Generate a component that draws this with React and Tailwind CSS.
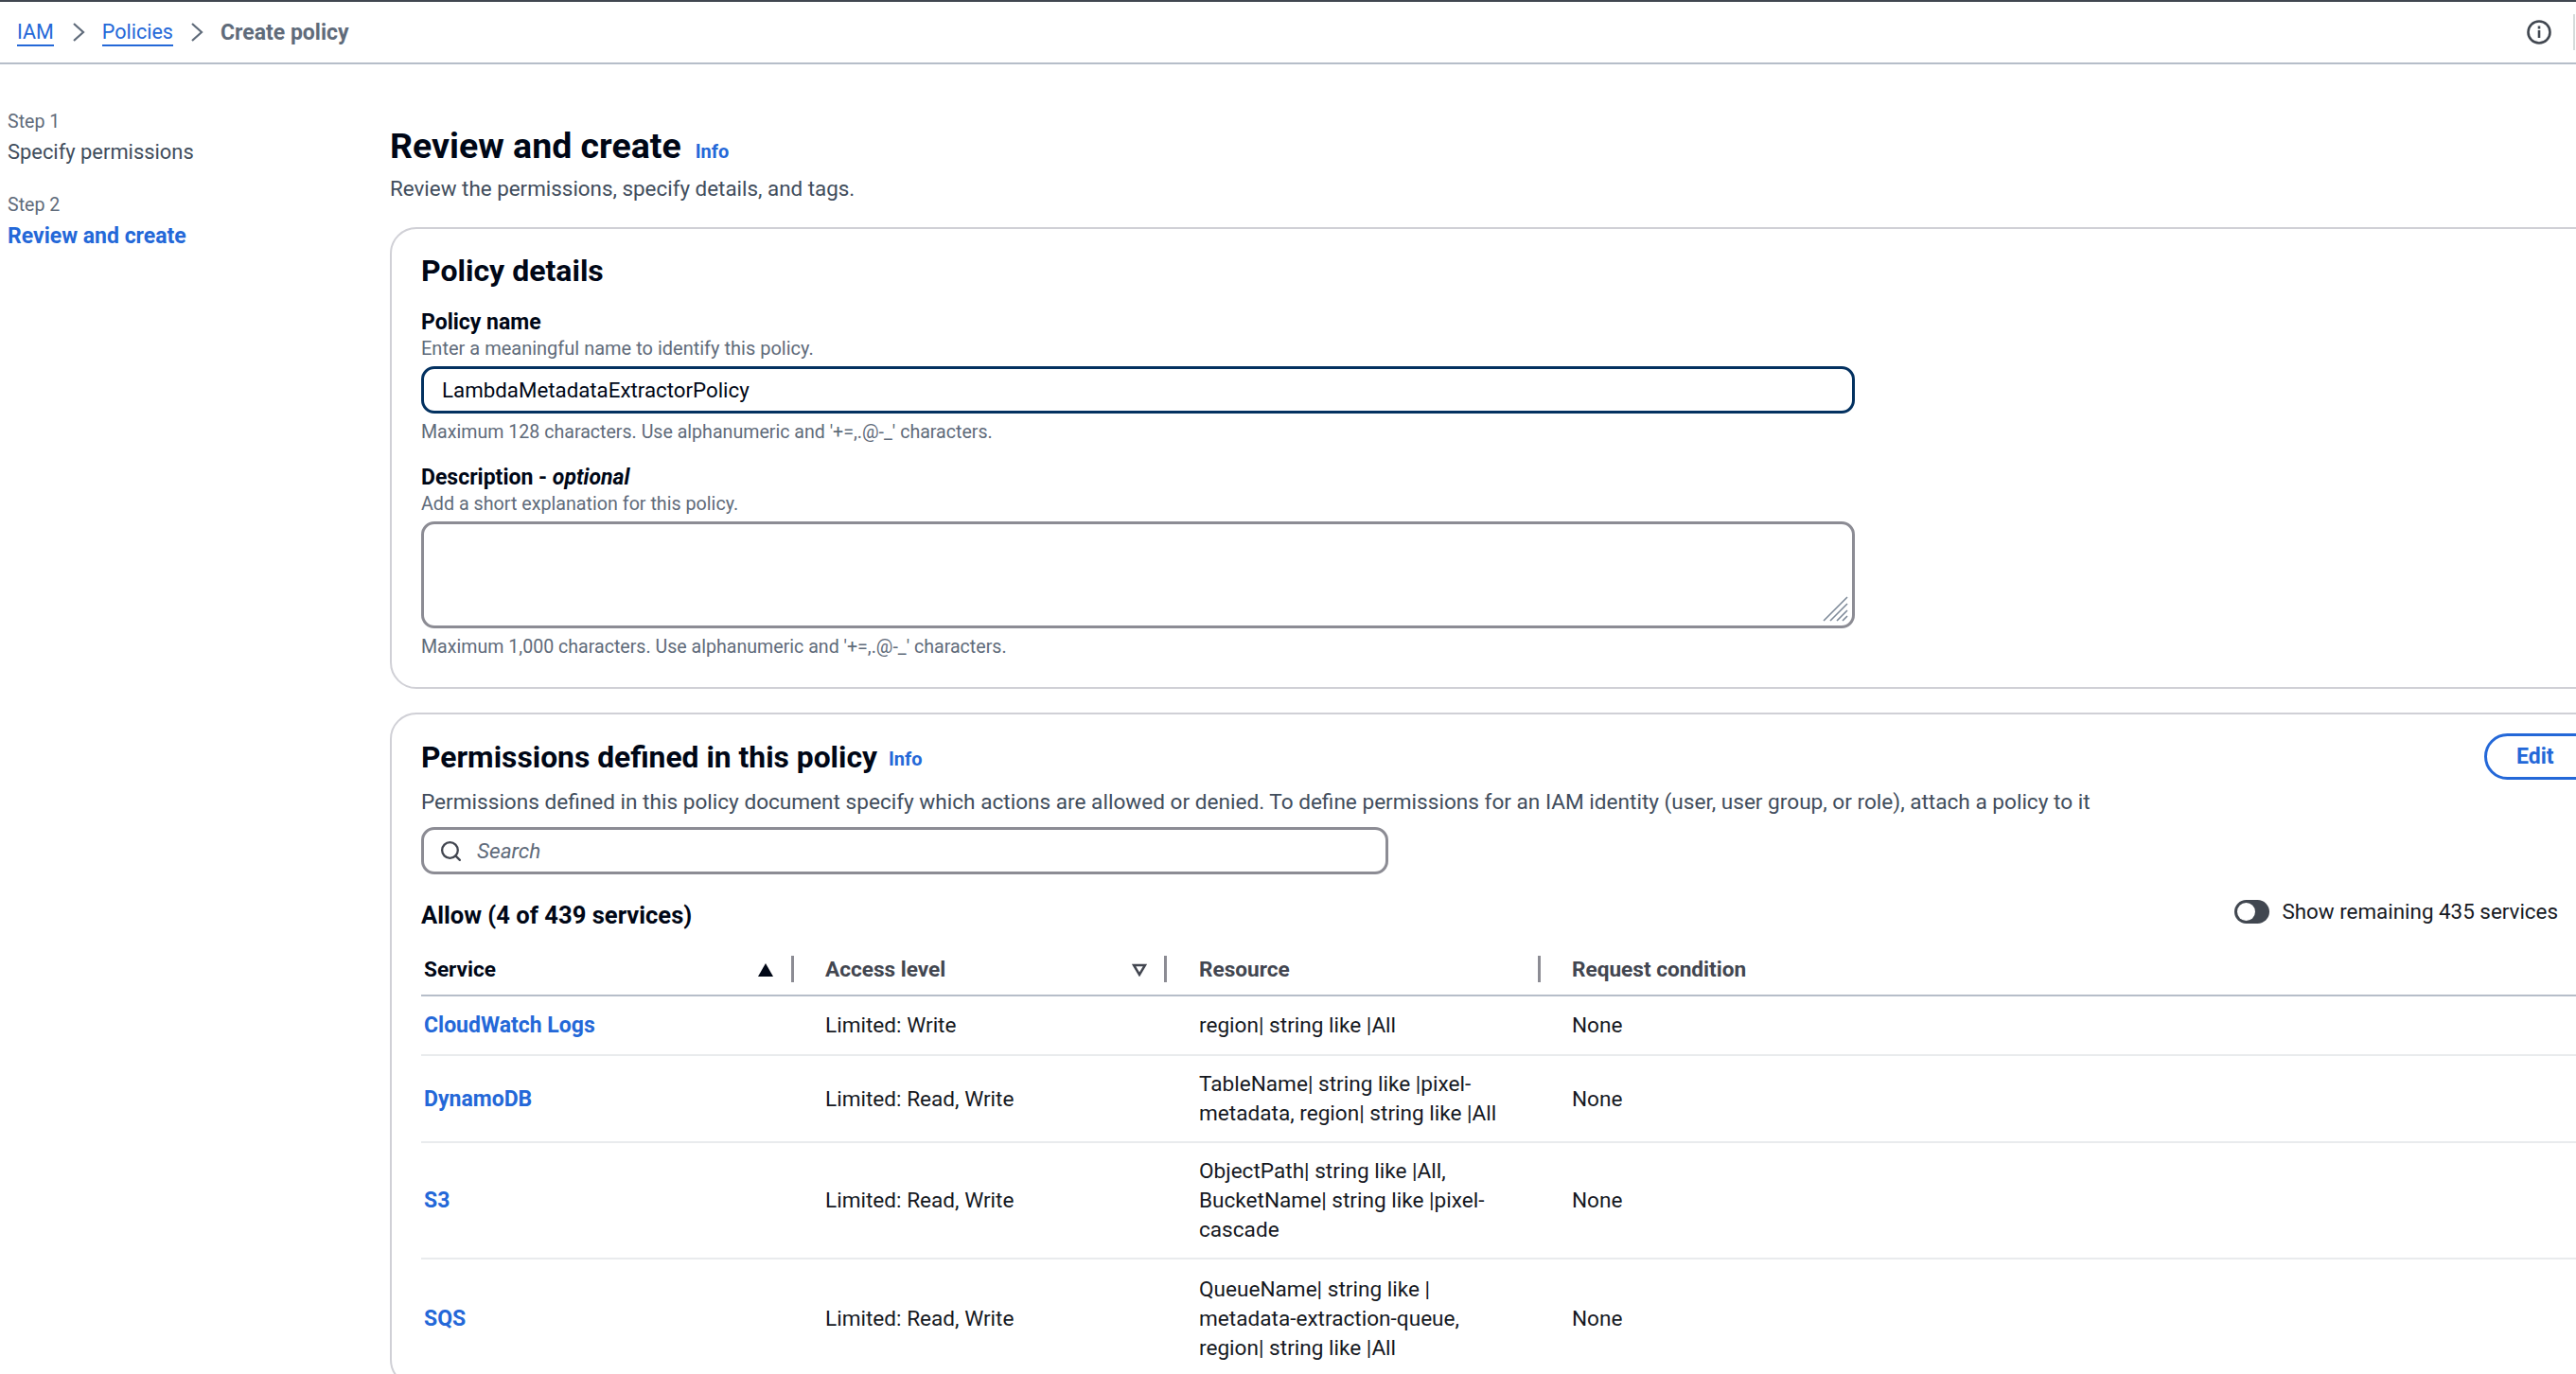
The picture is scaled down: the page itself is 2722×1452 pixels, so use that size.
import { Search } from "lucide-react";

const font = "font-['Roboto','Liberation_Sans',sans-serif]";

const rows = [
  { service: "CloudWatch Logs", access: "Limited: Write", resource: ["region| string like |All"], h: "h-[63px] border-b-2" },
  { service: "DynamoDB", access: "Limited: Read, Write", resource: ["TableName| string like |pixel-", "metadata, region| string like |All"], h: "h-[92px] border-b-2" },
  { service: "S3", access: "Limited: Read, Write", resource: ["ObjectPath| string like |All,", "BucketName| string like |pixel-", "cascade"], h: "h-[123px] border-b-2" },
  { service: "SQS", access: "Limited: Read, Write", resource: ["QueueName| string like |", "metadata-extraction-queue,", "region| string like |All"], h: "h-[124px]" },
];

const Chevron = () => (
  <svg width="16" height="22" viewBox="0 0 16 22" fill="none" stroke="#5f6b7a" strokeWidth="2.2">
    <path d="M3 2l10 9-10 9" />
  </svg>
);

const ColumnHead = ({ label, className, dark, sort, sep = true }) => (
  <div className={`relative flex h-full items-center font-bold ${className} ${dark ? "text-[#000716]" : "text-[#424650]"}`}>
    {label}
    {sort === "asc" && (
      <svg className="absolute right-[22px] top-[21px]" width="16" height="14" viewBox="0 0 16 14">
        <path d="M8 0l8 14H0z" fill="#000716" />
      </svg>
    )}
    {sort === "desc" && (
      <svg className="absolute right-[21px] top-[21px]" width="16" height="14" viewBox="0 0 16 14" fill="none" stroke="#424650" strokeWidth="2.5">
        <path d="M2 2h12L8 12z" />
      </svg>
    )}
    {sep && <span className="absolute right-0 top-[13px] h-[28px] w-[3px] bg-[#8c8c94]" />}
  </div>
);

export default function App() {
  return (
    <div className={`h-[1452px] w-[2722px] overflow-hidden bg-white text-[22.6px] leading-[31px] text-[#16191f] ${font}`}>
      <header className="flex h-[68px] items-center border-t-2 border-b-2 border-t-[#414750] border-b-[#b6bec9] pl-[18px] pr-[1px]">
        <a className="border-b-2 border-[#2468d8] text-[21.5px] leading-[27px] text-[#2468d8]">IAM</a>
        <span className="ml-[18px] mr-[17px]"><Chevron /></span>
        <a className="border-b-2 border-[#2468d8] text-[21.5px] leading-[27px] text-[#2468d8]">Policies</a>
        <span className="ml-[17px] mr-[17px]"><Chevron /></span>
        <span className="text-[23px] font-bold text-[#5f6b7a]">Create policy</span>
        <svg className="ml-auto mr-[23px]" width="26" height="26" viewBox="0 0 26 26" fill="none" stroke="#414750" strokeWidth="2.6">
          <circle cx="13" cy="13" r="11.5" />
          <path d="M13 11v8" />
          <path d="M13 6.5v3" />
        </svg>
        <span className="h-[38px] w-[2px] bg-[#d5dbdb]" />
      </header>

      <div className="flex">
        <nav className="w-[412px] shrink-0 pl-2 pt-[47px]">
          <div className="text-[19.6px] leading-[27px] text-[#5f6b7a]">Step 1</div>
          <div className="mt-[3px] text-[21.9px] text-[#414d5c]">Specify permissions</div>
          <div className="mt-[27px] text-[19.6px] leading-[27px] text-[#5f6b7a]">Step 2</div>
          <div className="mt-[4px] text-[23px] font-bold text-[#2468d8]">Review and create</div>
        </nav>

        <main className="w-[2400px] shrink-0 pt-[64px]">
          <div className="flex items-baseline">
            <h1 className="text-[37.5px] font-bold leading-[44px] text-[#000716]">Review and create</h1>
            <a className="ml-[15px] text-[20px] font-bold text-[#2468d8]">Info</a>
          </div>
          <p className="mt-[8px] text-[22.4px] text-[#414d5c]">Review the permissions, specify details, and tags.</p>

          <section className="mt-[25px] h-[488px] rounded-[28px] border-2 border-[#d0d0d6] pl-[31px] pt-[25px]">
            <h2 className="text-[32px] font-bold leading-[38px] text-[#000716]">Policy details</h2>
            <label className="mt-[20px] block text-[23px] font-bold text-[#000716]">Policy name</label>
            <div className="text-[20px] leading-[25px] text-[#5f6b7a]">Enter a meaningful name to identify this policy.</div>
            <div className="mt-[6px] flex h-[50px] w-[1515px] items-center rounded-[14px] border-[3.5px] border-[#033160] pl-[19px] text-[22.3px] text-[#000716]">
              LambdaMetadataExtractorPolicy
            </div>
            <div className="mt-[7px] text-[19.6px] leading-[25px] text-[#5f6b7a]">Maximum 128 characters. Use alphanumeric and '+=,.@-_' characters.</div>
            <label className="mt-[20px] block text-[23px] font-bold text-[#000716]">Description - <em>optional</em></label>
            <div className="text-[19.7px] leading-[25px] text-[#5f6b7a]">Add a short explanation for this policy.</div>
            <div className="relative mt-[6px] h-[113px] w-[1515px] rounded-[14px] border-[3px] border-[#8c8c94]">
              <svg className="absolute bottom-[4px] right-[4px]" width="27" height="27" viewBox="0 0 27 27" stroke="#7d8998" strokeWidth="1.6">
                <path d="M1 26L26 1M8 26L26 8M15 26L26 15M21 26l5-5" />
              </svg>
            </div>
            <div className="mt-[7px] text-[19.6px] leading-[25px] text-[#5f6b7a]">Maximum 1,000 characters. Use alphanumeric and '+=,.@-_' characters.</div>
          </section>

          <section className="mt-[25px] rounded-[28px] border-2 border-[#d0d0d6] pb-[8px] pl-[31px] pt-[20px]">
            <div className="flex items-center">
              <h2 className="w-[482px] whitespace-nowrap text-[31.8px] font-bold leading-[38px] text-[#000716]">Permissions defined in this policy</h2>
              <a className="ml-[12px] mt-[6px] w-[36px] text-[20px] font-bold text-[#2468d8]">Info</a>
              <button className="ml-[1650px] flex h-[49px] w-[120px] items-center rounded-full border-[3.5px] border-[#2468d8] pl-[31px] text-[23px] font-bold text-[#2468d8]">Edit</button>
            </div>
            <p className="mt-[8px] whitespace-nowrap text-[#414d5c]">Permissions defined in this policy document specify which actions are allowed or denied. To define permissions for an IAM identity (user, user group, or role), attach a policy to it</p>
            <div className="mt-[11px] flex h-[50px] w-[1022px] items-center rounded-[14px] border-[3px] border-[#8c8c94] pl-[16px]">
              <Search size={25} color="#424650" strokeWidth={2.2} />
              <span className="ml-[15px] italic text-[#5f6b7a]">Search</span>
            </div>

            <div className="mt-[26px] flex w-[2258px] items-center justify-between">
              <h3 className="text-[25.6px] font-bold leading-[34px] text-[#000716]">Allow (4 of 439 services)</h3>
              <div className="flex -translate-y-[4px] items-center">
                <span className="flex h-[25px] w-[37px] items-center rounded-full bg-[#414750] pl-[3px]">
                  <span className="h-[19px] w-[19px] rounded-full bg-white" />
                </span>
                <span className="ml-[13px] text-[22.4px]">Show remaining 435 services</span>
              </div>
            </div>

            <div className="mt-[13px] w-[2400px]">
              <div className="flex h-[56px] border-b-2 border-[#b6bec9]">
                <ColumnHead label="Service" dark sort="asc" className="w-[394px] pl-[3px]" />
                <ColumnHead label="Access level" sort="desc" className="w-[394px] pl-[33px]" />
                <ColumnHead label="Resource" className="w-[395px] pl-[34px]" />
                <ColumnHead label="Request condition" sep={false} className="pl-[33px]" />
              </div>
              {rows.map((row) => (
                <div key={row.service} className={`flex items-center border-[#e9ebed] ${row.h}`}>
                  <a className="w-[394px] pl-[3px] text-[23px] font-bold text-[#2468d8]">{row.service}</a>
                  <div className="w-[394px] pl-[33px]">{row.access}</div>
                  <div className="w-[395px] pl-[34px]">
                    {row.resource.map((line) => (
                      <div key={line}>{line}</div>
                    ))}
                  </div>
                  <div className="pl-[33px]">None</div>
                </div>
              ))}
            </div>
          </section>
        </main>
      </div>
    </div>
  );
}
